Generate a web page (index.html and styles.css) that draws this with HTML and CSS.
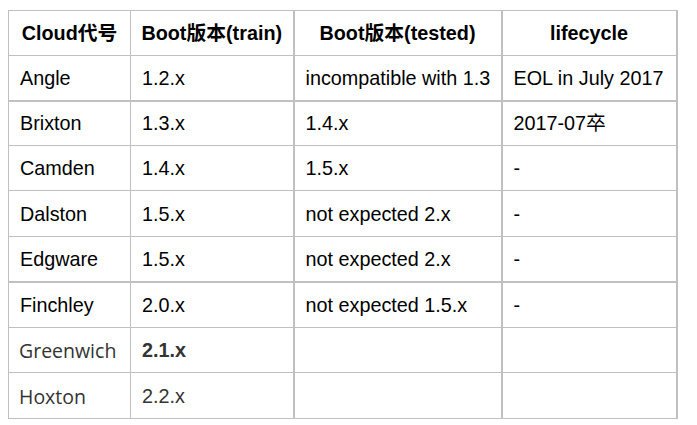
FILE: index.html
```html
<!DOCTYPE html>
<html lang="zh">
<head>
<meta charset="utf-8">
<title>Spring Cloud versions</title>
<link rel="stylesheet" href="styles.css">
</head>
<body>
<table class="versions">
  <colgroup>
    <col class="c1"><col class="c2"><col class="c3"><col class="c4">
  </colgroup>
  <thead>
    <tr class="r-head">
      <th>Cloud代号</th>
      <th>Boot版本(train)</th>
      <th>Boot版本(tested)</th>
      <th>lifecycle</th>
    </tr>
  </thead>
  <tbody>
    <tr class="r45 thick"><td>Angle</td><td>1.2.x</td><td>incompatible with 1.3</td><td>EOL in July 2017</td></tr>
    <tr class="r45"><td>Brixton</td><td>1.3.x</td><td>1.4.x</td><td>2017-07卒</td></tr>
    <tr class="r45"><td>Camden</td><td>1.4.x</td><td>1.5.x</td><td>-</td></tr>
    <tr class="r46"><td>Dalston</td><td>1.5.x</td><td>not expected 2.x</td><td>-</td></tr>
    <tr class="r45 thick"><td>Edgware</td><td>1.5.x</td><td>not expected 2.x</td><td>-</td></tr>
    <tr class="r46"><td>Finchley</td><td>2.0.x</td><td>not expected 1.5.x</td><td>-</td></tr>
    <tr class="r45 muted"><td class="alt">Greenwich</td><td><strong>2.1.x</strong></td><td></td><td></td></tr>
    <tr class="r46 muted"><td class="alt">Hoxton</td><td>2.2.x</td><td></td><td></td></tr>
  </tbody>
</table>
</body>
</html>
```

FILE: styles.css
```css
html, body {
  margin: 0;
  padding: 0;
  background: #ffffff;
}

body {
  padding: 10px 8px;
  font-family: "Liberation Sans", Arial, "Noto Sans CJK SC", sans-serif;
  font-size: 19.8px;
  color: #000000;
}

.versions {
  border-collapse: collapse;
  table-layout: fixed;
  width: 668px;
}

.c1 { width: 122px; }
.c2 { width: 163px; }
.c3 { width: 208px; }
.c4 { width: 175px; }

.versions th,
.versions td {
  border: 1px solid #c0c0c0;
  padding: 2px 4px 0 11px;
  vertical-align: middle;
  white-space: nowrap;
  line-height: 1.2;
  overflow: hidden;
}

.versions th {
  font-weight: bold;
  text-align: center;
  padding: 2px 4px 0;
}

.versions td:nth-child(2) {
  padding-left: 11px;
}

.versions th:nth-child(3),
.versions td:nth-child(3),
.versions th:nth-child(4),
.versions td:nth-child(4) {
  border-left-width: 2px;
}

.versions th:nth-child(4),
.versions td:nth-child(4) {
  border-right-width: 2px;
}

.r-head { height: 45px; }
.r45 { height: 45px; }
.r46 { height: 46px; }

.thick td {
  border-bottom-width: 2px;
}

.muted td {
  color: #333333;
}

.muted .alt {
  font-family: "Open Sans", "Liberation Sans", sans-serif;
  font-size: 19.5px;
  padding-left: 10px;
}

.muted strong {
  font-weight: bold;
}
```
